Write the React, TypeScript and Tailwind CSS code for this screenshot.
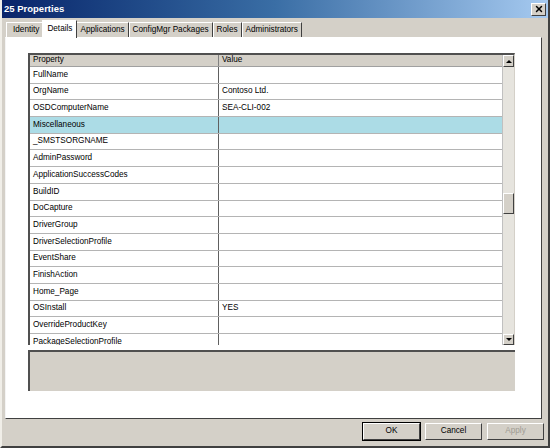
import { X } from "lucide-react";

const rows: [string, string][] = [
  ["FullName", ""],
  ["OrgName", "Contoso Ltd."],
  ["OSDComputerName", "SEA-CLI-002"],
  ["Miscellaneous", ""],
  ["_SMSTSORGNAME", ""],
  ["AdminPassword", ""],
  ["ApplicationSuccessCodes", ""],
  ["BuildID", ""],
  ["DoCapture", ""],
  ["DriverGroup", ""],
  ["DriverSelectionProfile", ""],
  ["EventShare", ""],
  ["FinishAction", ""],
  ["Home_Page", ""],
  ["OSInstall", "YES"],
  ["OverrideProductKey", ""],
  ["PackageSelectionProfile", ""],
];

const tabs = ["Identity", "Details", "Applications", "ConfigMgr Packages", "Roles", "Administrators"];

function Button({ label, primary, disabled }: { label: string; primary?: boolean; disabled?: boolean }) {
  return (
    <div
      className={`w-[57px] h-[17px] flex items-center justify-center bg-[#d4d0c8] border border-t-white border-l-white border-r-[#404040] border-b-[#404040] ${
        primary ? "outline outline-1 outline-black" : ""
      } ${disabled ? "text-[#a09c94]" : "text-black"}`}
    >
      {label}
    </div>
  );
}

export default function App() {
  return (
    <div
      className="w-[550px] h-[448px] bg-[#d4d0c8] flex flex-col overflow-hidden border-l-2 border-r-2 border-b-2 border-l-[#f0eee8] border-r-[#404040] border-b-[#404040] text-[8.2px] text-black"
      style={{ fontFamily: '"Liberation Sans", Arial, sans-serif' }}
    >
      {/* title bar */}
      <div className="h-[18px] shrink-0 flex items-center justify-between pl-[2px] pr-[2px] bg-gradient-to-r from-[#0a246a] via-[#3a6ea5] to-[#a6caf0]">
        <span className="text-white font-bold text-[9.5px]">25 Properties</span>
        <div className="w-[15px] h-[13px] bg-[#d4d0c8] flex items-center justify-center border border-t-white border-l-white border-r-[#404040] border-b-[#404040]">
          <X size={10} strokeWidth={3.5} color="black" />
        </div>
      </div>

      {/* tabs */}
      <div className="h-[18px] mt-[1px] shrink-0 flex items-end pl-[4px]">
        {tabs.map((t, i) =>
          t === "Details" ? (
            <div
              key={t}
              className="relative z-10 h-[18px] px-[4px] -mx-[1px] flex items-center bg-white border-t border-l border-t-white border-l-white border-r border-r-[#404040] mb-[-1px]"
            >
              {t}
            </div>
          ) : (
            <div
              key={t}
              className={`h-[15px] ${i === 0 ? "pl-[6px] pr-[3px]" : "px-[3px]"} flex items-center border-t border-l border-t-white border-l-white border-r border-r-[#404040] bg-[#d4d0c8]`}
            >
              {t}
            </div>
          )
        )}
      </div>

      {/* tab panel */}
      <div className="h-[382px] shrink-0 ml-[3px] mr-[6px] bg-white border border-t-white border-l-[#f4f4f4] border-r-[#404040] border-b-[#404040] flex flex-col pl-[22px] pt-[15px] pr-[26px]">
        <div className="h-[292px] shrink-0 flex border-t-2 border-l-2 border-t-[#505050] border-l-[#505050] border-r border-r-[#d4d0c8]">
          <div className="flex-1 flex flex-col overflow-hidden">
            <div className="h-[12px] shrink-0 flex bg-[#d4d0c8] border-b border-b-[#a0a0a0]">
              <div className="w-[189px] shrink-0 pl-[3px] border-r border-r-[#808080] flex items-center">Property</div>
              <div className="flex-1 pl-[3px] flex items-center">Value</div>
            </div>
            {rows.map(([k, v]) => (
              <div
                key={k}
                className={`h-[16.7px] shrink-0 flex border-b border-b-[#b4b4b4] ${
                  k === "Miscellaneous" ? "bg-[#acdce6]" : "bg-white"
                }`}
              >
                <div className="w-[189px] shrink-0 pl-[3px] border-r border-r-[#606060] flex items-center">{k}</div>
                <div className="flex-1 pl-[3px] flex items-center">{v}</div>
              </div>
            ))}
          </div>
          {/* scrollbar */}
          <div className="w-[12px] shrink-0 flex flex-col bg-[#e6e4de] border-l border-l-[#c0c0c0]">
            <div className="h-[12px] shrink-0 bg-[#d4d0c8] flex items-center justify-center border border-t-white border-l-white border-r-[#404040] border-b-[#404040]">
              <div className="w-0 h-0 border-l-[3px] border-r-[3px] border-b-[3px] border-l-transparent border-r-transparent border-b-black" />
            </div>
            <div className="h-[126px] shrink-0" />
            <div className="h-[21px] shrink-0 bg-[#d4d0c8] border border-t-white border-l-white border-r-[#404040] border-b-[#404040]" />
            <div className="flex-1" />
            <div className="h-[11px] shrink-0 bg-[#d4d0c8] flex items-center justify-center border border-t-white border-l-white border-r-[#404040] border-b-[#404040]">
              <div className="w-0 h-0 border-l-[3px] border-r-[3px] border-t-[3px] border-l-transparent border-r-transparent border-t-black" />
            </div>
          </div>
        </div>
        {/* description box */}
        <div className="mt-[5px] h-[41px] shrink-0 bg-[#d4d0c8] border-t-2 border-l-2 border-t-[#505050] border-l-[#505050]" />
      </div>

      {/* buttons */}
      <div className="flex-1 flex items-center justify-end gap-[5px] pr-[4px] pb-[2px]">
        <Button label="OK" primary />
        <Button label="Cancel" />
        <Button label="Apply" disabled />
      </div>
    </div>
  );
}
